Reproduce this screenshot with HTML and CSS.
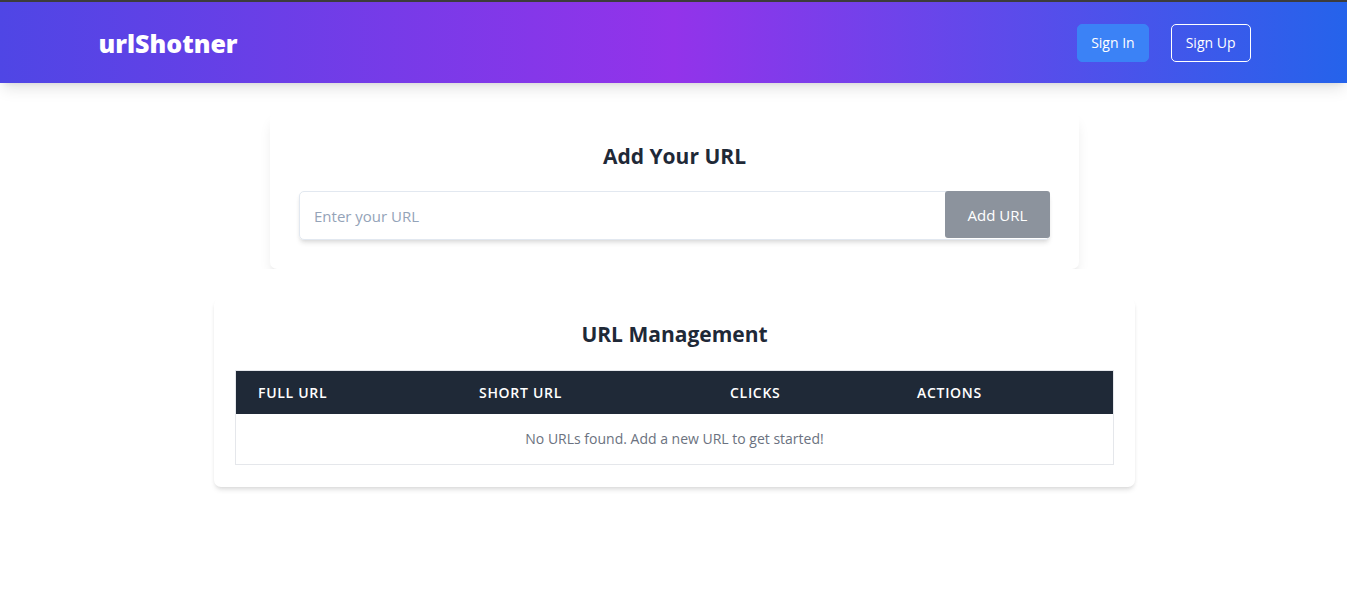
FILE: index.html
```html
<!DOCTYPE html>
<html lang="en">
<head>
  <meta charset="utf-8">
  <meta name="viewport" content="width=device-width, initial-scale=1">
  <title>urlShotner</title>
  <link rel="stylesheet" href="styles.css">
</head>
<body>
  <header class="navbar">
    <nav class="navbar-inner">
      <a class="brand" href="#">urlShotner</a>
      <div class="nav-actions">
        <button class="nav-button nav-button-solid" type="button">Sign In</button>
        <button class="nav-button nav-button-outline" type="button">Sign Up</button>
      </div>
    </nav>
  </header>
  <main class="content">
    <section class="add-section">
      <form class="add-card">
        <h2 class="card-title">Add Your URL</h2>
        <div class="url-field">
          <input class="url-input" type="text" placeholder="Enter your URL" aria-label="Enter your URL">
          <button class="url-submit" type="submit">Add URL</button>
        </div>
      </form>
    </section>
    <section class="manage-card">
      <h2 class="card-title">URL Management</h2>
      <table class="url-table">
        <thead>
          <tr>
            <th class="col-full" scope="col">Full URL</th>
            <th class="col-short" scope="col">Short URL</th>
            <th class="col-clicks" scope="col">Clicks</th>
            <th scope="col">Actions</th>
          </tr>
        </thead>
        <tbody>
          <tr>
            <td class="empty" colspan="4">No URLs found. Add a new URL to get started!</td>
          </tr>
        </tbody>
      </table>
    </section>
  </main>
</body>
</html>
```

FILE: styles.css
```css
* {
  box-sizing: border-box;
}

body {
  min-height: 100vh;
  margin: 0;
  background: #fff;
  color: #1f2937;
  font-family: "Segoe UI", "Open Sans", "Noto Sans", sans-serif;
  font-size: 14px;
  line-height: 20px;
}

button,
input {
  margin: 0;
  font: inherit;
}

.navbar {
  border-top: 2px solid #3c3c3c;
  background: linear-gradient(to right, #4f46e5, #9333ea, #2563eb) padding-box;
  box-shadow: 0 9px 14px -3px rgba(0, 0, 0, 0.1), 0 4px 6px -4px rgba(0, 0, 0, 0.1);
}

.navbar-inner {
  display: flex;
  align-items: center;
  justify-content: space-between;
  max-width: 1154px;
  margin: 0 auto;
  padding: 22px 0 21px 2px;
}

.brand {
  color: #fff;
  font-family: "Segoe UI", "Noto Sans", "Open Sans", sans-serif;
  font-size: 25px;
  font-weight: 900;
  line-height: 32px;
  text-decoration: none;
}

.nav-actions {
  display: flex;
  gap: 22px;
}

.nav-button {
  height: 38px;
  padding: 0 13px;
  border: 1px solid #fff;
  border-radius: 5px;
  color: #fff;
  font-size: 14px;
}

.nav-button-solid {
  border-color: #3b82f6;
  background: #3b82f6;
}

.nav-button-outline {
  padding: 0 14px;
  background: transparent;
}

.content {
  padding-left: 2px;
}

.add-section {
  overflow: hidden;
  padding-top: 29px;
}

.add-card {
  max-width: 809px;
  margin: 0 auto;
  padding: 29px;
  border-radius: 7px;
  background: #fff;
  box-shadow: 0 9px 14px -3px rgba(0, 0, 0, 0.1), 0 4px 5px -4px rgba(0, 0, 0, 0.1);
}

.card-title {
  margin: 0 0 20px;
  color: #1f2937;
  font-size: 21px;
  font-weight: 700;
  line-height: 30px;
  text-align: center;
}

.url-field {
  display: flex;
  align-items: flex-start;
  height: 49px;
  border: 1px solid #e2e8f0;
  border-radius: 5px;
  box-shadow: 0 4px 5px -1px rgba(0, 0, 0, 0.1), 0 2px 4px -2px rgba(0, 0, 0, 0.1);
}

.url-input {
  flex: 1;
  min-width: 0;
  height: 47px;
  padding: 0 14px;
  border: 0;
  outline: 0;
  background: transparent;
  color: #1f2937;
  font-size: 15px;
}

.url-input::placeholder {
  color: #94a3b8;
}

.url-submit {
  width: 105px;
  height: 47px;
  margin: -1px -1px 0 0;
  border: 0;
  border-radius: 3px;
  background: #8c939d;
  color: #fff;
  font-size: 15px;
}

.manage-card {
  max-width: 921px;
  margin: 29px auto 0;
  padding: 21px 21px 22px;
  border-radius: 7px;
  background: #fff;
  box-shadow: 0 4px 5px -1px rgba(0, 0, 0, 0.1), 0 2px 4px -2px rgba(0, 0, 0, 0.1);
}

.manage-card .card-title {
  margin-bottom: 21px;
}

.url-table {
  width: 100%;
  border: 1px solid #e5e7eb;
  border-spacing: 0;
  table-layout: fixed;
}

.url-table th {
  padding: 11px 22px;
  background: #1f2937;
  color: #fff;
  font-size: 14px;
  font-weight: 600;
  letter-spacing: 0.05em;
  line-height: 21px;
  text-align: left;
  text-transform: uppercase;
}

.col-full {
  width: 221px;
}

.col-short {
  width: 251px;
}

.col-clicks {
  width: 187px;
}

.empty {
  padding: 15px 22px;
  color: #6b7280;
  font-size: 14px;
  text-align: center;
}
```
